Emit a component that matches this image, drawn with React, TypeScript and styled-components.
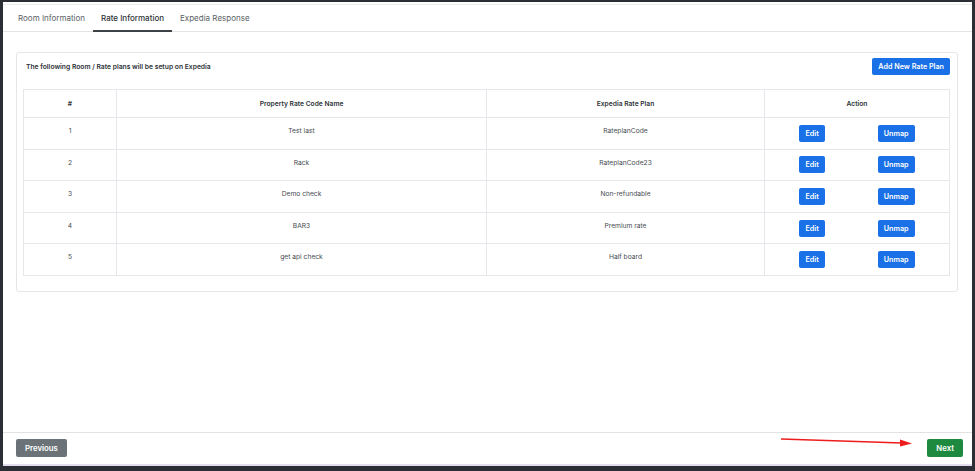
import * as React from 'react'
import styled, { createGlobalStyle } from 'styled-components'

const GlobalStyle = createGlobalStyle`
  html, body {
    margin: 0;
    padding: 0;
    background: #2b2e35;
    font-family: Inter, "Noto Sans", Arial, sans-serif;
    color: #333;
  }
`

const Frame = styled.div`
  width: 975px;
  height: 471px;
  box-sizing: border-box;
  padding: 2px 3px 5px 3px;
  display: flex;
  position: relative;
`

const Panel = styled.div`
  flex: 1;
  background: #fff;
  display: flex;
  flex-direction: column;
  border-bottom: 2px solid #e4dcef;
`

const ScrollBar = styled.div`
  width: 4px;
  background: #9c9c9c;
`

const TabBar = styled.div`
  margin-top: 2px;
  border-top: 1px solid #ececec;
  border-bottom: 1px solid #e3e3e3;
  display: flex;
  padding-left: 7px;
  height: 28px;
  box-sizing: border-box;
`

const Tab = styled.div<{ $active?: boolean }>`
  padding: 0 8px;
  display: flex;
  align-items: center;
  font-size: 8px;
  color: ${p => (p.$active ? '#2e3236' : '#5a5f64')};
  font-weight: ${p => (p.$active ? 500 : 400)};
  border-bottom: 2px solid ${p => (p.$active ? '#3d4247' : 'transparent')};
  margin-bottom: -1px;
`

const Content = styled.div`
  flex: 1;
  padding: 20px 14px 0 13px;
`

const Card = styled.div`
  border: 1px solid #e4e6e8;
  border-radius: 3px;
  padding: 5px 7px 15px 6px;
`

const CardHead = styled.div`
  display: flex;
  justify-content: space-between;
  align-items: flex-start;
  margin-bottom: 14px;
`

const CardTitle = styled.div`
  font-size: 6.75px;
  font-weight: 600;
  color: #2c3136;
  padding: 4px 0 0 3px;
`

const Button = styled.button<{ $variant?: 'primary' | 'secondary' | 'success' }>`
  font-family: inherit;
  border: none;
  border-radius: 2px;
  color: #fff;
  font-weight: 600;
  cursor: pointer;
  background: ${p =>
    p.$variant === 'secondary'
      ? '#6b7379'
      : p.$variant === 'success'
      ? '#1e8a3f'
      : '#1a70e6'};
`

const SmallButton = styled(Button)`
  font-size: 7.2px;
  height: 17px;
  padding: 0 6px;
`

const FootButton = styled(Button)`
  font-size: 7.8px;
  height: 18px;
  padding: 0 9px;
`

const Table = styled.table`
  width: 100%;
  border-collapse: collapse;
  font-size: 6.7px;
  table-layout: fixed;
`

const Th = styled.th`
  border: 1px solid #e5e7ea;
  height: 27px;
  font-weight: 600;
  color: #2e3338;
  text-align: center;
  vertical-align: middle;
  padding: 0 8px;
`

const Td = styled.td`
  border: 1px solid #e5e7ea;
  height: 31.6px;
  box-sizing: border-box;
  padding: 8px 8px 0 8px;
  text-align: center;
  vertical-align: top;
  color: #464b50;
  line-height: 10px;
`

const ActionTd = styled(Td)`
  padding: 0 8px;
  vertical-align: middle;
`

const Actions = styled.div`
  display: flex;
  justify-content: space-around;
  align-items: center;
`

const Footer = styled.div`
  border-top: 1px solid #e2e2e2;
  height: 32px;
  box-sizing: border-box;
  display: flex;
  align-items: center;
  justify-content: space-between;
  padding: 0 9px 1px 13px;
`

const Arrow = styled.svg`
  position: absolute;
  left: 778px;
  top: 434px;
`

const rows = [
  { id: 1, name: 'Test last', plan: 'RateplanCode' },
  { id: 2, name: 'Rack', plan: 'RateplanCode23' },
  { id: 3, name: 'Demo check', plan: 'Non-refundable' },
  { id: 4, name: 'BAR3', plan: 'Premium rate' },
  { id: 5, name: 'get api check', plan: 'Half board' },
]

export default function App() {
  return (
    <>
      <GlobalStyle />
      <Frame>
        <Panel>
          <TabBar>
            <Tab>Room Information</Tab>
            <Tab $active>Rate Information</Tab>
            <Tab>Expedia Response</Tab>
          </TabBar>
          <Content>
            <Card>
              <CardHead>
                <CardTitle>The following Room / Rate plans will be setup on Expedia</CardTitle>
                <SmallButton>Add New Rate Plan</SmallButton>
              </CardHead>
              <Table>
                <colgroup>
                  <col style={{ width: 93 }} />
                  <col style={{ width: 370 }} />
                  <col style={{ width: 278 }} />
                  <col style={{ width: 185 }} />
                </colgroup>
                <thead>
                  <tr>
                    <Th>#</Th>
                    <Th>Property Rate Code Name</Th>
                    <Th>Expedia Rate Plan</Th>
                    <Th>Action</Th>
                  </tr>
                </thead>
                <tbody>
                  {rows.map(r => (
                    <tr key={r.id}>
                      <Td>{r.id}</Td>
                      <Td>{r.name}</Td>
                      <Td>{r.plan}</Td>
                      <ActionTd>
                        <Actions>
                          <SmallButton>Edit</SmallButton>
                          <SmallButton>Unmap</SmallButton>
                        </Actions>
                      </ActionTd>
                    </tr>
                  ))}
                </tbody>
              </Table>
            </Card>
          </Content>
          <Footer>
            <FootButton $variant="secondary">Previous</FootButton>
            <FootButton $variant="success">Next</FootButton>
          </Footer>
        </Panel>
        <ScrollBar />
        <Arrow width="140" height="14" viewBox="0 0 140 14">
          <line x1="3" y1="5" x2="124" y2="9" stroke="#ee1c1c" strokeWidth="1.6" />
          <polygon points="134,9.4 122,5.6 122,12.4" fill="#ee1c1c" />
        </Arrow>
      </Frame>
    </>
  )
}
